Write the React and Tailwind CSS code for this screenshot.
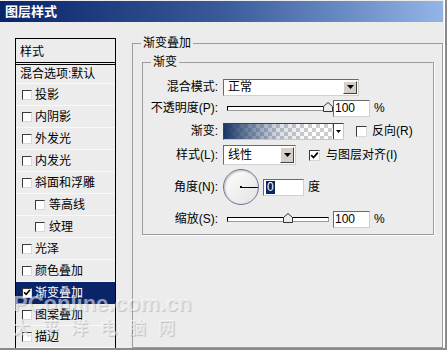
import React from "react";

function Check({ checked, size = "w-[11px] h-[11px]" }) {
  return (
    <span
      className={`${size} shrink-0 border border-t-[#3a3a3a] border-l-[#3a3a3a] border-r-[#d8d8d8] border-b-[#d8d8d8] bg-white flex items-center justify-center`}
    >
      {checked && (
        <svg width="9" height="9" viewBox="0 0 9 9">
          <path d="M1.2 4.2 L3.5 6.6 L7.8 1.6" stroke="#000" strokeWidth="1.7" fill="none" />
        </svg>
      )}
    </span>
  );
}

function DropBtn({ h = "h-[13px]" }) {
  return (
    <span className={`w-[14px] ${h} bg-[#d4d0c8] border border-t-white border-l-white border-r-[#404040] border-b-[#404040] flex items-center justify-center shrink-0`}>
      <svg width="7" height="4" viewBox="0 0 7 4">
        <path d="M0 0 H7 L3.5 4 Z" fill="#000" />
      </svg>
    </span>
  );
}

function Slider({ pos }) {
  return (
    <div className="relative w-[110px] h-[22px] shrink-0">
      <div className="absolute left-[4px] top-[9px] w-[102px] h-[5px] bg-white border border-t-black border-l-black border-r-[#9a9a9a] border-b-[#9a9a9a]" />
      <svg
        className={`absolute top-[5px] ${pos}`}
        width="10"
        height="10"
        viewBox="0 0 10 10"
      >
        <path d="M0.5 9.5 V4.5 L5 0.5 L9.5 4.5 V9.5 Z" fill="#ececec" stroke="#333" strokeWidth="1" />
      </svg>
    </div>
  );
}

function NumInput({ w = "w-[37px]", children }) {
  return (
    <div className={`${w} h-[17px] shrink-0 bg-white border border-t-[#6a6a6a] border-l-[#6a6a6a] border-r-[#d0d0d0] border-b-[#d0d0d0] flex items-center pl-[1px] leading-[14px]`}>
      {children}
    </div>
  );
}

const items = [
  { t: "投影" },
  { t: "内阴影" },
  { t: "外发光" },
  { t: "内发光" },
  { t: "斜面和浮雕" },
  { t: "等高线", sub: true },
  { t: "纹理", sub: true },
  { t: "光泽" },
  { t: "颜色叠加" },
  { t: "渐变叠加", on: true },
  { t: "图案叠加" },
  { t: "描边" },
];

export default function App() {
  return (
    <div className="relative w-[447px] h-[350px] overflow-hidden bg-[#ececec] text-[12px] text-black font-['Liberation_Sans','Noto_Sans_CJK_SC',sans-serif] flex flex-col">
      <div className="h-[21px] mt-[1px] mr-[4px] shrink-0 bg-gradient-to-r from-[#0a246a] via-[#3a5a9a] to-[#93b5e6] flex items-center pl-[5px] text-white font-bold text-[13px] leading-none">
        图层样式
      </div>
      <div className="flex flex-1 min-h-0 pl-[15px] pt-[16px] gap-[16px]">
        {/* left list */}
        <div className="w-[101px] shrink-0 border-x border-t border-black flex flex-col overflow-hidden">
          <div className="h-[23px] shrink-0 flex items-center pl-[4px] pt-[2px] leading-[14px]">样式</div>
          <div className="h-[3px] shrink-0 border-y border-black" />
          <div className="h-[19px] shrink-0 flex items-center pl-[4px] leading-[14px] border-b border-[#fbfbfb]">混合选项:默认</div>
          {items.map((it) => (
            <div
              key={it.t}
              className={`h-[22px] shrink-0 flex items-center leading-[14px] border-b ${
                it.on ? "bg-[#0a246a] text-white border-[#0a246a]" : "border-[#f8f8f8]"
              } ${it.sub ? "pl-[19px]" : "pl-[6px]"}`}
            >
              <Check checked={it.on} size="w-[10px] h-[10px]" />
              <span className={it.sub ? "ml-[4px]" : "ml-[3px]"}>{it.t}</span>
            </div>
          ))}
        </div>

        {/* right group */}
        <div className="relative mt-[5px] w-[311px] h-[305px] shrink-0 border border-[#9c9c9c] shadow-[1px_1px_0_#fff]">
          <span className="absolute left-[8px] -top-[8px] px-[2px] bg-[#ececec] leading-[14px]">渐变叠加</span>

          <div className="relative ml-[9px] mt-[18px] w-[292px] h-[173px] border border-[#9c9c9c] shadow-[1px_1px_0_#fff] pt-[14px] flex flex-col leading-[14px]">
            <span className="absolute left-[8px] -top-[8px] px-[2px] bg-[#ececec] leading-[14px]">渐变</span>

            {/* 混合模式 */}
            <div className="h-[20px] flex items-center">
              <span className="w-[75px] text-right shrink-0">混合模式:</span>
              <div className="ml-[5px] w-[136px] h-[17px] bg-white border border-t-[#6a6a6a] border-l-[#6a6a6a] border-r-[#d0d0d0] border-b-[#d0d0d0] flex items-center justify-between pl-[4px] pr-[1px]">
                <span>正常</span>
                <DropBtn />
              </div>
            </div>

            {/* 不透明度 */}
            <div className="h-[22px] flex items-center">
              <span className="w-[75px] text-right shrink-0">不透明度(P):</span>
              <div className="ml-[5px] flex items-center">
                <Slider pos="left-[100px]" />
                <NumInput>100</NumInput>
                <span className="ml-[4px]">%</span>
              </div>
            </div>

            {/* 渐变 */}
            <div className="h-[24px] flex items-center">
              <span className="w-[75px] text-right shrink-0">渐变:</span>
              <div className="ml-[5px] w-[121px] h-[17px] border border-t-[#404040] border-l-[#404040] border-r-[#c8c8c8] border-b-[#c8c8c8] flex">
                <div className="flex-1 [background-image:linear-gradient(to_right,#1c3766_0%,rgba(40,68,115,0.7)_20%,rgba(60,85,130,0.2)_50%,rgba(60,85,130,0)_80%),repeating-conic-gradient(#cdcdcd_0_25%,#ffffff_0_50%)] [background-size:100%_100%,8px_8px]" />
                <div className="w-[10px] bg-white border-l border-[#404040] flex items-center justify-center">
                  <svg width="5" height="3" viewBox="0 0 5 3">
                    <path d="M0 0 H5 L2.5 3 Z" fill="#000" />
                  </svg>
                </div>
              </div>
              <span className="ml-[12px]"><Check /></span>
              <span className="ml-[5px]">反向(R)</span>
            </div>

            {/* 样式 */}
            <div className="h-[24px] flex items-center">
              <span className="w-[75px] text-right shrink-0">样式(L):</span>
              <div className="ml-[5px] w-[73px] h-[20px] bg-white border border-t-[#6a6a6a] border-l-[#6a6a6a] border-r-[#d0d0d0] border-b-[#d0d0d0] flex items-center justify-between pl-[4px] pr-[1px]">
                <span>线性</span>
                <DropBtn h="h-[16px]" />
              </div>
              <span className="ml-[13px]"><Check checked /></span>
              <span className="ml-[6px]">与图层对齐(I)</span>
            </div>

            {/* 角度 */}
            <div className="h-[40px] flex items-center">
              <span className="w-[75px] text-right shrink-0">角度(N):</span>
              <div className="relative ml-[5px] w-[36px] h-[36px] shrink-0 rounded-full border border-[#6b7690] bg-gradient-to-br from-[#ffffff] to-[#e2e2e2] shadow-[inset_1px_1px_2px_rgba(0,0,0,0.25)]">
                <div className="absolute left-[16px] top-[16px] w-[2px] h-[2px] bg-black" />
                <div className="absolute left-[17px] top-[16.5px] w-[17px] h-[1px] bg-black" />
              </div>
              <div className="ml-[4px]">
                <NumInput w="w-[41px]">
                  <span className="ml-[1px] bg-[#0a246a] text-white px-[1px] leading-[13px]">0</span>
                </NumInput>
              </div>
              <span className="ml-[4px]">度</span>
            </div>

            {/* 缩放 */}
            <div className="h-[24px] flex items-center">
              <span className="w-[75px] text-right shrink-0">缩放(S):</span>
              <div className="ml-[5px] flex items-center">
                <Slider pos="left-[60px]" />
                <NumInput>100</NumInput>
                <span className="ml-[4px]">%</span>
              </div>
            </div>
          </div>
        </div>
      </div>

      {/* right window edge */}
      <div className="absolute right-0 top-0 w-[3px] h-[350px] bg-[#8a8a8a] border-l border-white" />
      <div className="absolute left-0 bottom-0 w-[447px] h-[2px] bg-[#8a8a8a]" />

      {/* watermark */}
      <div className="absolute left-[13px] top-[293px] pointer-events-none text-white/55 [text-shadow:1px_1px_1px_rgba(0,0,0,0.18)] leading-none">
        <div className="text-[22px] font-bold font-['Liberation_Sans',sans-serif]">PConline.com.cn</div>
        <div className="mt-[3px] text-[17px] font-bold tracking-[12px] font-['Noto_Sans_CJK_SC',sans-serif]">太平洋电脑网</div>
      </div>
    </div>
  );
}
